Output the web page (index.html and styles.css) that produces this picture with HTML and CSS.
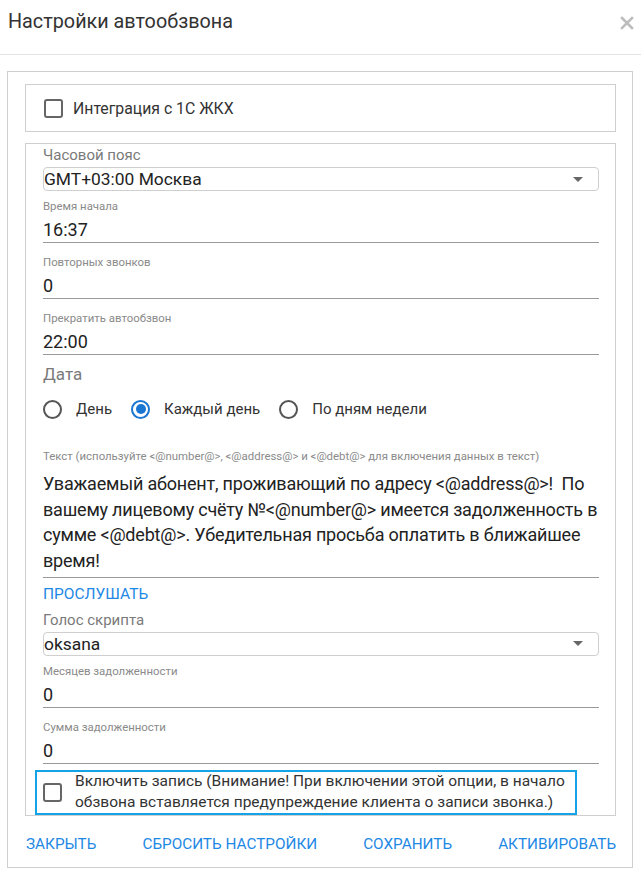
FILE: index.html
```html
<!DOCTYPE html>
<html lang="ru">
<head>
<meta charset="utf-8">
<title>Настройки автообзвона</title>
<link rel="stylesheet" href="styles.css">
</head>
<body>
<div class="dialog">
  <div class="header">
    <div class="title">Настройки автообзвона</div>
    <svg class="close" width="14" height="14" viewBox="0 0 14 14"><path d="M2 2 L12 12 M12 2 L2 12" stroke="#bdbdbd" stroke-width="2.6" stroke-linecap="square"/></svg>
  </div>
  <div class="body">
    <div class="outer">
      <div class="box integ">
        <span class="checkbox"></span>
        <span class="integ-label">Интеграция с 1С ЖКХ</span>
      </div>
      <div class="box main">
        <div class="label-big">Часовой пояс</div>
        <div class="select">
          <span>GMT+03:00 Москва</span>
          <span class="arrow"></span>
        </div>
        <div class="field first">
          <div class="label-small">Время начала</div>
          <div class="value">16:37</div>
        </div>
        <div class="field">
          <div class="label-small">Повторных звонков</div>
          <div class="value">0</div>
        </div>
        <div class="field">
          <div class="label-small">Прекратить автообзвон</div>
          <div class="value">22:00</div>
        </div>
        <div class="label-date">Дата</div>
        <div class="radios">
          <span class="radio"></span><span class="radio-label">День</span>
          <span class="radio checked"></span><span class="radio-label">Каждый день</span>
          <span class="radio"></span><span class="radio-label">По дням недели</span>
        </div>
        <div class="label-small text-label">Текст (используйте &lt;@number@&gt;, &lt;@address@&gt; и &lt;@debt@&gt; для включения данных в текст)</div>
        <div class="textarea">Уважаемый абонент, проживающий по адресу &lt;@address@&gt;!&nbsp; По вашему лицевому счёту №&lt;@number@&gt; имеется задолженность в сумме &lt;@debt@&gt;. Убедительная просьба оплатить в ближайшее время!</div>
        <div class="listen">ПРОСЛУШАТЬ</div>
        <div class="label-big voice">Голос скрипта</div>
        <div class="select">
          <span>oksana</span>
          <span class="arrow"></span>
        </div>
        <div class="field first">
          <div class="label-small">Месяцев задолженности</div>
          <div class="value">0</div>
        </div>
        <div class="field">
          <div class="label-small">Сумма задолженности</div>
          <div class="value">0</div>
        </div>
        <div class="record">
          <span class="checkbox"></span>
          <span class="record-text">Включить запись (Внимание! При включении этой опции, в начало обзвона вставляется предупреждение клиента о записи звонка.)</span>
        </div>
      </div>
      <div class="actions">
        <span class="btn">ЗАКРЫТЬ</span>
        <span class="btn">СБРОСИТЬ НАСТРОЙКИ</span>
        <span class="btn">СОХРАНИТЬ</span>
        <span class="btn">АКТИВИРОВАТЬ</span>
      </div>
    </div>
  </div>
</div>
</body>
</html>
```

FILE: styles.css
```css
* { box-sizing: border-box; }
html, body { margin: 0; padding: 0; background: #fff; }
body {
  font-family: Roboto, "Noto Sans", sans-serif;
  color: #222;
  width: 641px;
}
.header {
  height: 55px;
  border-bottom: 1px solid #e3e3e3;
  display: flex;
  align-items: flex-start;
  justify-content: space-between;
  padding: 10px 7px 0 8px;
}
.title {
  font-size: 19.8px;
  line-height: 24px;
  color: #333;
}
.close { margin-top: 6px; }
.body { padding: 16px 8px 0 7px; }
.outer {
  border: 1px solid #cfcfcf;
  padding: 12px 16px 0 17px;
  height: 797px;
}
.box { border: 1px solid #cfcfcf; }
.integ {
  height: 48px;
  display: flex;
  align-items: center;
  padding-left: 18px;
}
.checkbox {
  width: 19px;
  height: 19px;
  border: 2px solid #666;
  border-radius: 3px;
  flex: none;
}
.integ-label {
  margin-left: 10px;
  font-size: 15.8px;
  color: #333;
}
.main {
  margin-top: 11px;
  padding: 1px 16px 0 17px;
  height: 673px;
}
.label-big {
  font-size: 15px;
  line-height: 20px;
  color: #7a7a7a;
}
.select {
  height: 24px;
  border: 1px solid #cfcfcf;
  border-radius: 4px;
  margin-top: 2px;
  display: flex;
  align-items: center;
  justify-content: space-between;
  padding: 0 15px 0 0;
  font-size: 17.4px;
  color: #222;
}
.arrow {
  width: 0;
  height: 0;
  border-left: 5px solid transparent;
  border-right: 5px solid transparent;
  border-top: 5px solid #666;
}
.field {
  margin-top: 11px;
  border-bottom: 1px solid #9a9a9a;
  height: 45px;
}
.field.first { margin-top: 7px; }
.label-small {
  font-size: 11.4px;
  line-height: 16px;
  color: #8a8a8a;
}
.value {
  font-size: 18px;
  line-height: 24px;
  padding-top: 4px;
  color: #222;
}
.label-date {
  margin-top: 9px;
  font-size: 17px;
  line-height: 20px;
  color: #7a7a7a;
}
.radios {
  margin-top: 13px;
  height: 24px;
  display: flex;
  align-items: center;
}
.radio {
  width: 19px;
  height: 19px;
  border: 2px solid #555;
  border-radius: 50%;
  flex: none;
  position: relative;
}
.radio.checked { border-color: #1976d2; }
.radio.checked::after {
  content: "";
  position: absolute;
  left: 2.5px;
  top: 2.5px;
  width: 10px;
  height: 10px;
  border-radius: 50%;
  background: #1976d2;
}
.radio-label {
  font-size: 15px;
  color: #333;
  margin: 0 19px 0 14px;
}
.text-label { margin-top: 27px; }
.textarea {
  margin-top: 7px;
  font-size: 18px;
  letter-spacing: -0.2px;
  line-height: 25.7px;
  color: #222;
  padding-bottom: 3px;
  border-bottom: 1px solid #9a9a9a;
}
.listen {
  margin-top: 6px;
  font-size: 15.5px;
  line-height: 20px;
  color: #1e88e5;
}
.voice { margin-top: 6px; }
.record {
  margin: 6px 0 0 -8px;
  width: 542px;
  height: 45px;
  border: 2px solid #14a3e6;
  display: flex;
  align-items: center;
  padding-left: 6px;
}
.record-text {
  margin-left: 13px;
  font-size: 15.5px;
  line-height: 21px;
  color: #333;
}
.actions {
  display: flex;
  justify-content: space-between;
  padding: 18px 0 0 1px;
}
.btn {
  font-size: 15.3px;
  line-height: 20px;
  color: #1e88e5;
}
```
